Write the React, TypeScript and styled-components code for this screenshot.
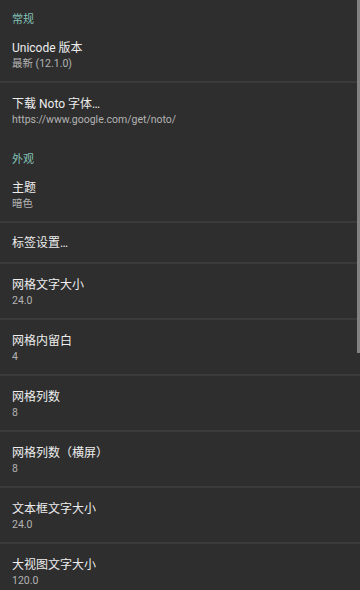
import React from "react";
import styled, { createGlobalStyle } from "styled-components";

const GlobalStyle = createGlobalStyle`
  html, body {
    margin: 0;
    padding: 0;
    background: #2e2e2e;
  }
  body {
    font-family: "Roboto", "Noto Sans CJK SC", sans-serif;
    -webkit-font-smoothing: antialiased;
  }
`;

type Pref = {
  title: string;
  summary?: string;
};

type Group = {
  name: string;
  items: Pref[];
};

const groups: Group[] = [
  {
    name: "常规",
    items: [
      { title: "Unicode 版本", summary: "最新 (12.1.0)" },
      { title: "下载 Noto 字体…", summary: "https://www.google.com/get/noto/" },
    ],
  },
  {
    name: "外观",
    items: [
      { title: "主题", summary: "暗色" },
      { title: "标签设置…" },
      { title: "网格文字大小", summary: "24.0" },
      { title: "网格内留白", summary: "4" },
      { title: "网格列数", summary: "8" },
      { title: "网格列数（横屏）", summary: "8" },
      { title: "文本框文字大小", summary: "24.0" },
      { title: "大视图文字大小", summary: "120.0" },
    ],
  },
];

const App = () => {
  return (
    <>
      <GlobalStyle />
      <StyleScreen>
        <StyleList>
          {groups.map((group, gi) => (
            <section key={group.name}>
              <StyleCategory>{group.name}</StyleCategory>
              {group.items.map((item, i) => {
                const last = gi === 0 && i === group.items.length - 1;
                return (
                  <StyleRow key={item.title} $single={!item.summary} $last={last}>
                    <StyleTitle>{item.title}</StyleTitle>
                    {item.summary && <StyleSummary>{item.summary}</StyleSummary>}
                  </StyleRow>
                );
              })}
            </section>
          ))}
        </StyleList>
        <StyleScrollbar />
      </StyleScreen>
    </>
  );
};

const StyleScreen = styled.div`
  position: relative;
  width: 360px;
  height: 590px;
  overflow: hidden;
  background: #2e2e2e;
`;

const StyleList = styled.div`
  display: flex;
  flex-direction: column;
  margin-top: -1px;
`;

const StyleCategory = styled.div`
  height: 28px;
  box-sizing: border-box;
  padding: 14px 12px 1px;
  font-size: 11px;
  line-height: 13px;
  color: #84c2b6;
`;

const StyleRow = styled.div<{ $single: boolean; $last: boolean }>`
  display: flex;
  flex-direction: column;
  padding: ${(p) => (p.$single ? "13px 12px 12px" : "14px 12px 10px")};
  border-bottom: 2px solid ${(p) => (p.$last ? "transparent" : "#3b3b3b")};
`;

const StyleTitle = styled.div`
  font-size: 12px;
  line-height: 14px;
  color: #ededed;
`;

const StyleSummary = styled.div`
  margin-top: 2px;
  font-size: 10.5px;
  line-height: 14px;
  color: #b3b3b3;
`;

const StyleScrollbar = styled.div`
  position: absolute;
  top: 0;
  right: 0;
  width: 3px;
  height: 353px;
  background: #828282;
`;

export default App;
